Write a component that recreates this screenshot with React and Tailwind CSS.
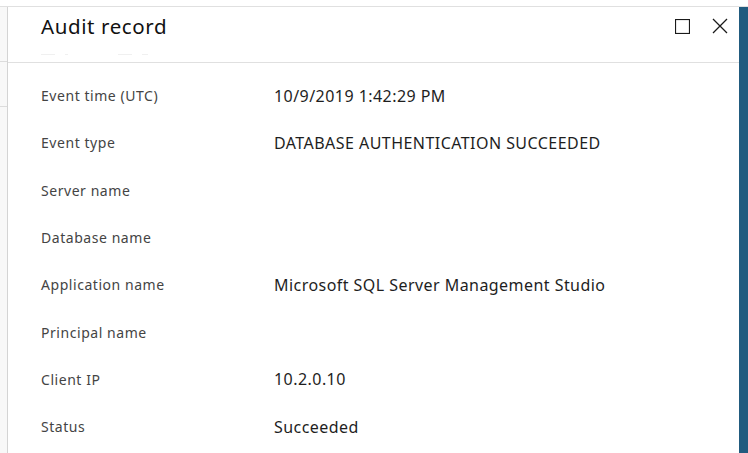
import React from 'react';

const rows = [
  ['Event time (UTC)', '10/9/2019 1:42:29 PM'],
  ['Event type', 'DATABASE AUTHENTICATION SUCCEEDED'],
  ['Server name', ''],
  ['Database name', ''],
  ['Application name', 'Microsoft SQL Server Management Studio'],
  ['Principal name', ''],
  ['Client IP', '10.2.0.10'],
  ['Status', 'Succeeded'],
];

const App = () => {
  return (
    <div className="w-[748px] h-[453px] overflow-hidden bg-white pt-[6px] font-['Noto_Sans',sans-serif]">
      <div className="flex h-full border-t border-[#e0e0e0]">
        {/* left blade edge */}
        <div className="w-[8px] shrink-0 bg-[#f8f8f8] border-r border-[#d4d4d4]">
          <div className="h-[55px] border-b border-[#dcdcdc]"></div>
          <div className="h-[45px] border-b border-[#dcdcdc]"></div>
        </div>

        <div className="flex-1 flex flex-col">
          <div className="h-[56px] shrink-0 border-b border-[#e0e0e0] flex items-start justify-between pl-[33px] pr-[11px]">
            <div className="pt-[5px]">
              <h2 className="text-[20.5px] leading-[28px] tracking-[0.6px] text-[#111111]">Audit record</h2>
              <div className="h-[2px] mt-[14px] overflow-hidden flex gap-[10px]">
                <span className="block w-[14px] h-[1px] bg-[#f0f0f0]"></span>
                <span className="block w-[3px] h-[1px] bg-[#f0f0f0]"></span>
                <span className="block w-[14px] h-[1px] bg-[#f0f0f0] ml-[40px]"></span>
                <span className="block w-[6px] h-[1px] bg-[#f0f0f0]"></span>
              </div>
            </div>
            <div className="flex items-center gap-[22px] pt-[11px]">
              <svg width="15" height="15" viewBox="0 0 15 15">
                <rect x="0.5" y="0.5" width="14" height="14" fill="none" stroke="#1a1a1a" strokeWidth="1.2" />
              </svg>
              <svg width="16" height="16" viewBox="0 0 16 16">
                <path d="M1 1 L15 15 M15 1 L1 15" stroke="#1a1a1a" strokeWidth="1.3" />
              </svg>
            </div>
          </div>

          <div className="pt-[9px] pl-[33px]">
            {rows.map(([label, value]) => (
              <div key={label} className="flex items-center h-[47.3px]">
                <div className="w-[233px] shrink-0 text-[14px] tracking-[0.55px] text-[#444444]">{label}</div>
                <div className="text-[16px] tracking-[0.45px] text-[#1e1e1e]">{value}</div>
              </div>
            ))}
          </div>
        </div>

        <div className="w-[9px] shrink-0 bg-[#215b7f]"></div>
      </div>
    </div>
  );
};

export default App;
